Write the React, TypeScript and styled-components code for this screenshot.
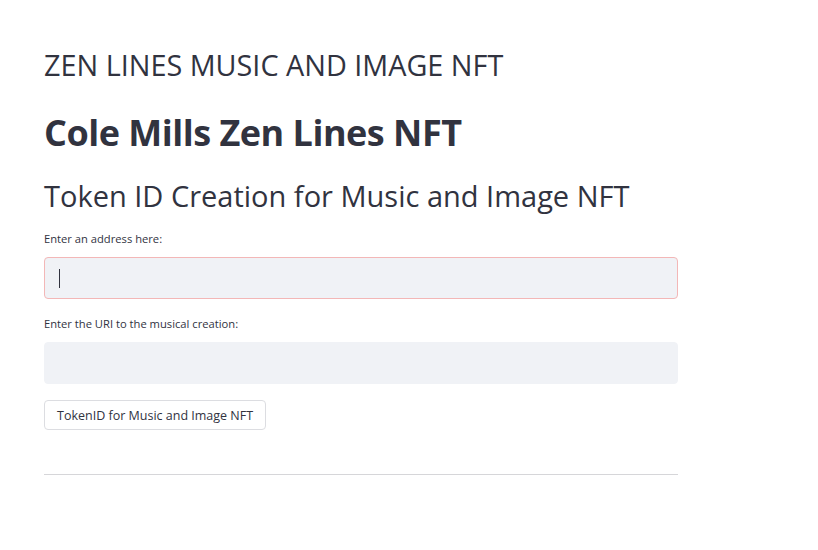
import React from "react";
import styled, { createGlobalStyle } from "styled-components";

const Global = createGlobalStyle`
  html, body { margin: 0; padding: 0; background: #ffffff; }
  body { font-family: "Open Sans", "Liberation Sans", sans-serif; color: #31333f; }
`;

const Main = styled.main`
  width: 634px;
  padding: 45px 0 0 44px;
  display: flex;
  flex-direction: column;
`;

const Heading = styled.h2<{ $size: number; $weight: number; $lh: number; $mb: number; $ls?: number }>`
  margin: 0 0 ${(p) => p.$mb}px 0;
  font-size: ${(p) => p.$size}px;
  font-weight: ${(p) => p.$weight};
  line-height: ${(p) => p.$lh}px;
  letter-spacing: ${(p) => p.$ls ?? 0}px;
  color: #31333f;
  white-space: nowrap;
`;

const Field = styled.div<{ $mb: number }>`
  display: flex;
  flex-direction: column;
  gap: 11px;
  margin-bottom: ${(p) => p.$mb}px;
`;

const Label = styled.label`
  font-size: 11.2px;
  line-height: 14px;
  color: #31333f;
`;

const InputBox = styled.div<{ $focused?: boolean }>`
  height: 42px;
  box-sizing: border-box;
  border: 1px solid ${(p) => (p.$focused ? "#f3b7b7" : "#f0f2f6")};
  border-radius: 4px;
  background: #f0f2f6;
  display: flex;
  align-items: center;
  padding-left: 14px;
`;

const Caret = styled.span`
  width: 1px;
  height: 19px;
  background: #31333f;
`;

const Button = styled.button`
  align-self: flex-start;
  height: 30px;
  padding: 0 12px;
  border: 1px solid #dcdde1;
  border-radius: 4px;
  background: #ffffff;
  font-family: "Open Sans", "Liberation Sans", sans-serif;
  font-size: 12.5px;
  color: #31333f;
`;

const Rule = styled.hr`
  margin: 44px 0 0 0;
  border: none;
  border-top: 1px solid #d6d6d9;
`;

export default function App() {
  return (
    <>
      <Global />
      <Main>
        <Heading $size={28.8} $weight={400} $lh={40} $mb={25}>ZEN LINES MUSIC AND IMAGE NFT</Heading>
        <Heading as="h1" $size={36} $weight={700} $lh={46} $mb={20} $ls={-0.5}>Cole Mills Zen Lines NFT</Heading>
        <Heading as="h3" $size={29} $weight={400} $lh={40} $mb={16}>Token ID Creation for Music and Image NFT</Heading>
        <Field $mb={18}>
          <Label>Enter an address here:</Label>
          <InputBox $focused><Caret /></InputBox>
        </Field>
        <Field $mb={16}>
          <Label>Enter the URI to the musical creation:</Label>
          <InputBox />
        </Field>
        <Button>TokenID for Music and Image NFT</Button>
        <Rule />
      </Main>
    </>
  );
}
